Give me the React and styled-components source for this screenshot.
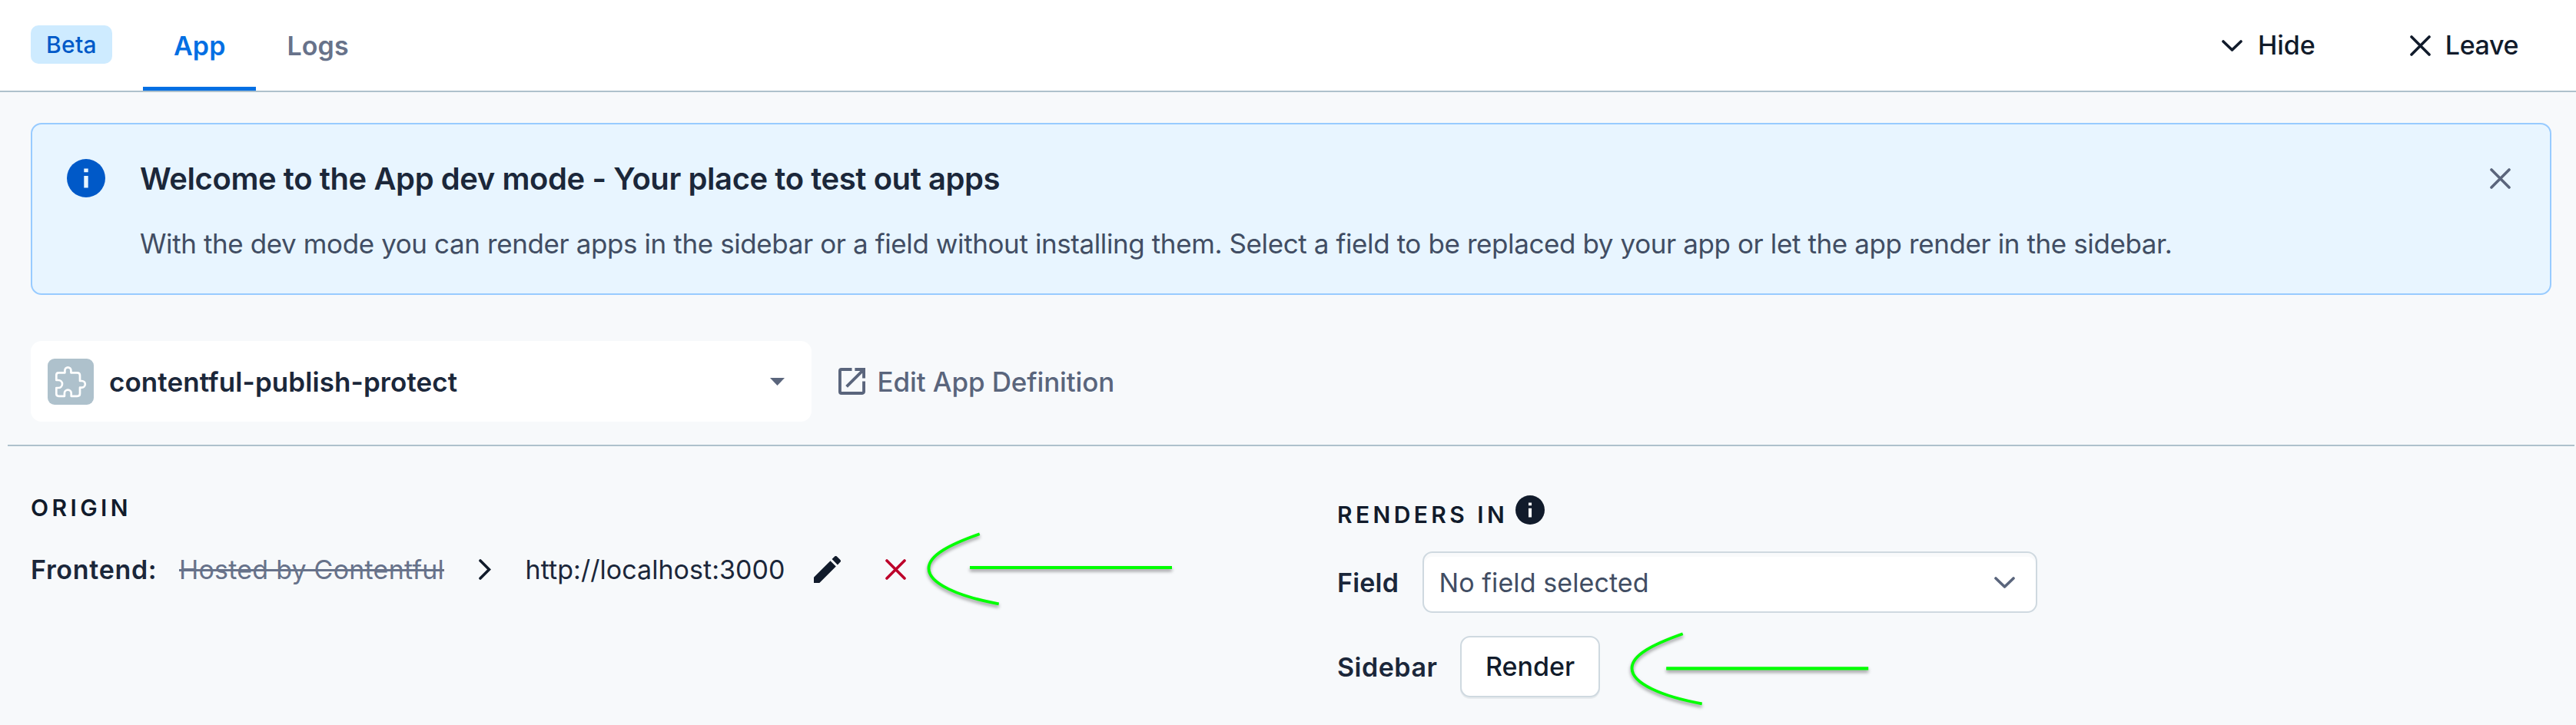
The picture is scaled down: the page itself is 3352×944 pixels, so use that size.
import React from "react";
import styled, { createGlobalStyle } from "styled-components";

const Global = createGlobalStyle`
  *{box-sizing:border-box}
  body{margin:0;background:#f7f9fb;font-family:Inter,"Liberation Sans",sans-serif;color:#1b273a;}
`;

const Page = styled.div`width:3352px;height:944px;overflow:hidden;position:relative;background:#f7f9fb;`;

const Header = styled.header`
  height:120px;background:#fff;border-bottom:2px solid #aec1cc;display:flex;align-items:stretch;padding:0 75px 0 40px;
`;
const Badge = styled.span`
  width:106px;height:50px;margin:33px 40px 0 0;border-radius:10px;background:#ceebff;color:#0059c8;
  font-size:30px;font-weight:500;letter-spacing:0.3px;display:flex;align-items:center;justify-content:center;
`;
const Tab = styled.button`
  border:0;background:none;font:600 34px/119px Inter,sans-serif;padding:0 40px;white-space:nowrap;
  letter-spacing:0.1px;
  color:${(p) => (p.$active ? "#036fe3" : "#67728a")};
  box-shadow:${(p) => (p.$active ? "inset 0 -5px 0 #036fe3" : "none")};
`;
const Actions = styled.div`margin-left:auto;display:flex;gap:123px;`;
const Action = styled.button`
  border:0;padding:0;background:none;display:flex;align-items:center;gap:${(p) => p.$gap}px;
  font:500 34px/1 Inter,sans-serif;letter-spacing:${(p) => p.$track}px;color:#111b2b;
`;

const Note = styled.section`
  margin:40px 32px 0 40px;height:224px;border:2px solid #98cbff;border-radius:14px;background:#e8f5ff;
  display:flex;padding:45px 51px 0 45px;
`;
const NoteBody = styled.div`margin-left:45px;flex:1;`;
const NoteTitle = styled.h2`margin:1px 0 0;font-size:40px;line-height:50px;font-weight:600;letter-spacing:-0.43px;`;
const NoteText = styled.p`margin:34px 0 0;font-size:35px;line-height:50px;letter-spacing:-0.4px;color:#414d63;white-space:nowrap;`;
const Dismiss = styled.button`border:0;padding:12px 0 0;background:none;display:flex;align-items:flex-start;`;

const AppBar = styled.div`
  margin:60px 2px 0 10px;padding:0 0 30px 30px;height:137px;border-bottom:2px solid #aec1cc;display:flex;align-items:center;
`;
const AppSelect = styled.div`
  width:1016px;height:105px;border-radius:14px;background:#fff;display:flex;align-items:center;padding:0 35px 0 22px;
`;
const AppIcon = styled.span`width:60px;height:60px;border-radius:9px;background:#aec1cc;display:flex;`;
const AppName = styled.strong`margin-left:20px;flex:1;font-size:35px;font-weight:600;letter-spacing:0.08px;`;
const EditLink = styled.a`
  margin-left:35px;display:flex;align-items:center;gap:15.5px;font-size:35px;font-weight:500;letter-spacing:-0.12px;color:#5a657c;
`;

const Columns = styled.div`display:grid;grid-template-columns:1700px 1fr;padding-left:40px;`;
const Column = styled.section`padding-top:${(p) => p.$top}px;`;
const Heading = styled.h3`
  margin:0;height:40px;font-size:30px;line-height:40px;font-weight:600;letter-spacing:4.4px;color:#111b2b;
  display:flex;align-items:flex-start;gap:10px;
`;
const HeadingIcon = styled.span`margin-top:-5px;display:flex;`;
const Row = styled.div`display:flex;align-items:center;height:80px;margin-top:${(p) => p.$gap}px;`;
const Label = styled.span`
  font-size:34px;font-weight:600;width:${(p) => p.$w}px;letter-spacing:${(p) => p.$track || 0}px;white-space:nowrap;
`;
const Hosted = styled.s`font-size:34px;letter-spacing:0.22px;width:389px;color:#67728a;white-space:nowrap;`;
const Url = styled.span`font-size:34px;margin-left:44.5px;width:375.5px;letter-spacing:0.05px;`;
const RemoveButton = styled.button`border:0;padding:0;margin-left:58px;background:none;display:flex;`;
const Field = styled.div`
  width:800px;height:80px;border:2px solid #cfd9e0;border-radius:13px;background:#fff;box-shadow:inset 0 5px 0 #f9fafb;
  display:flex;align-items:center;justify-content:space-between;padding:0 27px 0 19.5px;
  font-size:34px;letter-spacing:0.1px;color:#414d63;
`;
const Button = styled.button`
  width:182px;height:80px;border:2px solid #cfd9e0;border-radius:13px;background:#fff;box-shadow:0 2px 0 #e7ebee;
  font:500 34px/1 Inter,sans-serif;color:#111b2b;padding:0;
`;
const ArrowMark = styled.svg`
  position:absolute;left:${(p) => p.$x}px;top:${(p) => p.$y}px;overflow:visible;
  filter:drop-shadow(0 3px 2px rgba(0,0,0,.4));pointer-events:none;
`;

const Cross = ({ color }) => (
  <svg width="27" height="27" viewBox="0 0 27 27" fill="none" stroke={color} strokeWidth="3.6" strokeLinecap="round"><path d="M2 2 25 25M25 2 2 25" /></svg>
);
const Chevron = ({ color }) => (
  <svg width="27" height="15" viewBox="0 0 27 15" fill="none" stroke={color} strokeWidth="3.6" strokeLinecap="round" strokeLinejoin="round"><path d="M2 2 13.5 13 25 2" /></svg>
);
const Info = ({ size, color, dot }) => (
  <svg width={size} height={size} viewBox="0 0 50 50"><circle cx="25" cy="25" r="25" fill={color} /><path d="M22.3 12.500h5.400v4.800h-5.400zM22.300 22h5.400v15.500h-5.400z" fill={dot} /></svg>
);
const Puzzle = () => (
  <svg width="60" height="60" viewBox="0 0 60 60" fill="none" stroke="#fff" strokeWidth="2.7" strokeLinejoin="round">
    <path d="M14.300 18.300H22.400V15.400A4 4 0 0 1 30.400 15.400V18.300H38.500Q42 18.300 42 21.800V29H44.500A4.300 4.300 0 0 1 44.500 37.600H42V45.500Q42 48.800 38.500 48.800H30.700V45A4.400 4.400 0 0 0 21.900 45V48.800H14.300Q11.300 48.800 11.300 45.800V38H14A5 5 0 0 0 14 28H11.300V21.300Q11.300 18.300 14.300 18.300Z" />
  </svg>
);
const Arrow = ({ x, y, from, lineY }) => (
  <ArrowMark $x={x} $y={y} width="330" height="102" fill="none" stroke="#00ff00">
    <path strokeWidth="3.8" d="M74.700 5.300C36 19 8.500 33 8.500 50C8.500 70 48 87 99.700 96.300" />
    <path strokeWidth="4.2" d={`M${from} ${lineY}h263`} />
  </ArrowMark>
);

export default function App() {
  return (
    <Page>
      <Global />
      <Header>
        <Badge>Beta</Badge>
        <Tab $active>App</Tab>
        <Tab>Logs</Tab>
        <Actions>
          <Action $gap={20} $track={0}><Chevron color="#111b2b" />Hide</Action>
          <Action $gap={19} $track={-0.4}><Cross color="#111b2b" />Leave</Action>
        </Actions>
      </Header>
      <Note>
        <Info size={50} color="#0059c8" dot="#e8f5ff" />
        <NoteBody>
          <NoteTitle>Welcome to the App dev mode - Your place to test out apps</NoteTitle>
          <NoteText>With the dev mode you can render apps in the sidebar or a field without installing them. Select a field to be replaced by your app or let the app render in the sidebar.</NoteText>
        </NoteBody>
        <Dismiss aria-label="Dismiss"><Cross color="#5a657c" /></Dismiss>
      </Note>
      <AppBar>
        <AppSelect>
          <AppIcon><Puzzle /></AppIcon>
          <AppName>contentful-publish-protect</AppName>
          <svg width="19" height="10" viewBox="0 0 19 10"><path d="M0 0H19L9.500 10Z" fill="#5a657c" /></svg>
        </AppSelect>
        <EditLink>
          <svg width="35" height="35" viewBox="3 3 18 18"><path fill="#5a657c" d="M19 19H5V5h7V3H5a2 2 0 0 0-2 2v14a2 2 0 0 0 2 2h14c1.100 0 2-.9 2-2v-7h-2v7zM14 3v2h3.590l-9.830 9.830 1.410 1.410L19 6.410V10h2V3h-7z" /></svg>
          Edit App Definition
        </EditLink>
      </AppBar>
      <Columns>
        <Column $top={60}>
          <Heading>ORIGIN</Heading>
          <Row $gap={20}>
            <Label $w={193} $track={0.7}>Frontend:</Label>
            <Hosted>Hosted by Contentful</Hosted>
            <svg width="17" height="27" viewBox="0 0 17 27" fill="none" stroke="#111b2b" strokeWidth="3.6" strokeLinecap="round"><path d="M3 2 14.500 13.500 3 25" /></svg>
            <Url>http://localhost:3000</Url>
            <svg width="35" height="35" viewBox="3 3 18 18"><path fill="#111b2b" d="M3 17.250V21h3.750L17.810 9.940l-3.750-3.750L3 17.250zM20.710 7.040a1 1 0 0 0 0-1.410l-2.340-2.340a1 1 0 0 0-1.410 0l-1.830 1.830 3.750 3.750 1.830-1.830z" /></svg>
            <RemoveButton aria-label="Remove"><Cross color="#bd002a" /></RemoveButton>
          </Row>
        </Column>
        <Column $top={69}>
          <Heading>RENDERS IN<HeadingIcon><Info size={38} color="#111b2b" dot="#f7f9fb" /></HeadingIcon></Heading>
          <Row $gap={28}>
            <Label $w={111} $track={0.2}>Field</Label>
            <Field>No field selected<Chevron color="#5a657c" /></Field>
          </Row>
          <Row $gap={30}>
            <Label $w={160} $track={0.5}>Sidebar</Label>
            <Button>Render</Button>
          </Row>
        </Column>
      </Columns>
      <Arrow x={1200} y={690} from={62} lineY={49} />
      <Arrow x={2114.8} y={819.7} from={53.2} lineY={50.3} />
    </Page>
  );
}
